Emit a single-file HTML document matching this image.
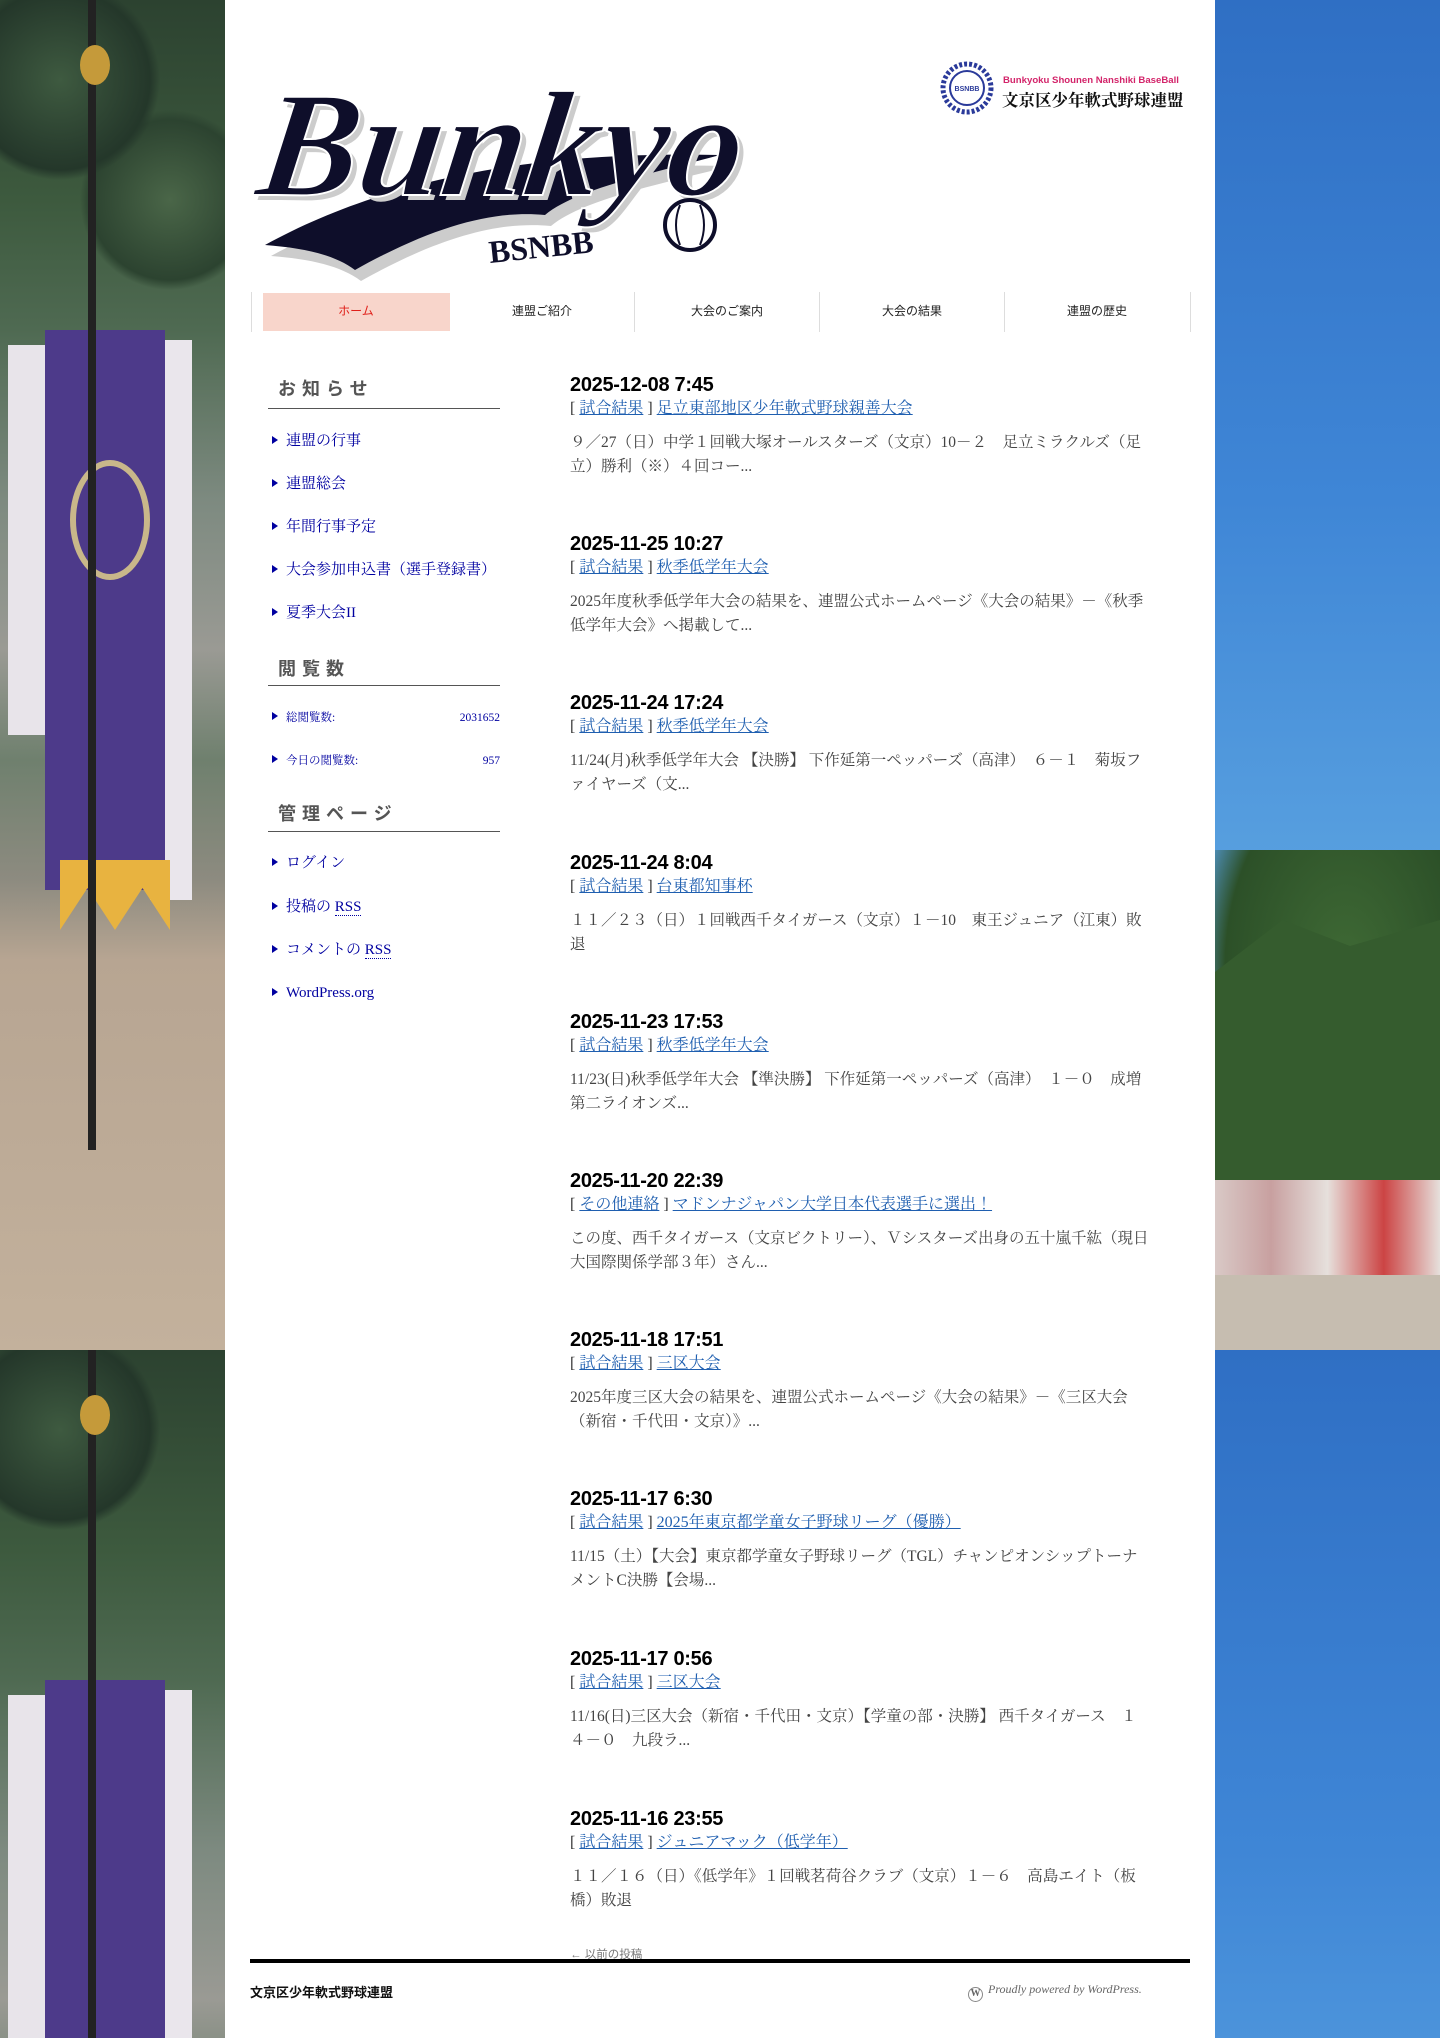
<!DOCTYPE html>
<html><head><meta charset="utf-8">
<style>
*{margin:0;padding:0;box-sizing:border-box}
html,body{width:1440px;height:2038px;overflow:hidden}
body{font-family:"Liberation Serif","Noto Serif CJK SC",serif;background:#4a8fd6}
#w{position:relative;width:1440px;height:2038px;overflow:hidden;background:#4a8fd6}
.abs{position:absolute}
.L{left:0;width:225px;height:1350px;overflow:hidden;background:linear-gradient(180deg,#2c4230 0,#3d5a3e 200px,#4f6a52 330px,#7d8a80 500px,#9a9a94 650px,#6f806e 760px,#8d8b80 880px,#b7a592 960px,#c3b19c 1350px)}
.R{left:1215px;width:225px;height:1350px;overflow:hidden;background:linear-gradient(180deg,#2f6fc4 0,#3f86d6 500px,#5aa2e0 900px,#7ab6e6 1150px)}
.nav a{position:absolute;top:292px;height:39px;line-height:39px;text-align:center;font-family:"Liberation Sans","Noto Sans CJK JP",sans-serif;font-size:12px;color:#222;width:186px}
.sep{position:absolute;top:292px;height:40px;width:1px;background:#ddd}
.sh{position:absolute;left:278px;font-family:"Liberation Sans","Noto Sans CJK JP",sans-serif;font-weight:bold;font-size:18px;color:#555;letter-spacing:6px}
.sl{position:absolute;left:268px;width:232px;height:1px;background:#555}
.si{position:absolute;left:272px;font-size:15px;color:#0000a0;line-height:20px;font-family:"Liberation Serif","Noto Serif CJK JP",serif}
.si:before{content:"";display:inline-block;width:0;height:0;border-left:6px solid #0000a0;border-top:4px solid transparent;border-bottom:4px solid transparent;margin-right:8px;vertical-align:1px}
.ss{font-size:11.5px}
.post{position:absolute;left:570px;width:600px}
.d{font-family:"Liberation Sans",sans-serif;font-weight:bold;font-size:20px;color:#000;line-height:24px;letter-spacing:-0.3px}
.c{font-size:16px;color:#333;line-height:24px;font-family:"Liberation Serif","Noto Serif CJK JP",serif}
.c a{color:#1f5fb0;text-decoration:underline}
.e{font-size:15.5px;color:#444;line-height:24px;margin-top:10px;font-family:"Liberation Serif","Noto Serif CJK JP",serif;white-space:nowrap}
</style></head><body><div id="w">
<div class="abs L" style="top:0">
 <div class="abs" style="left:0;top:0;width:225px;height:330px;background:radial-gradient(circle at 60px 80px,#3e5a40 0,#24372a 90px,transparent 100px),radial-gradient(circle at 170px 200px,#4a6648 0,#2c4330 80px,transparent 90px)"></div>
 <div class="abs" style="left:8px;top:345px;width:40px;height:390px;background:#e8e4ea"></div>
 <div class="abs" style="left:150px;top:340px;width:42px;height:560px;background:#eae6ec"></div>
 <div class="abs" style="left:45px;top:330px;width:120px;height:560px;background:#4d3a8a"></div>
 <div class="abs" style="left:60px;top:860px;width:110px;height:70px;background:#e8b340;clip-path:polygon(0 0,100% 0,100% 100%,75% 40%,50% 100%,25% 40%,0 100%)"></div>
 <div class="abs" style="left:70px;top:460px;width:80px;height:120px;border-radius:50%;border:6px solid #c9b78a"></div>
 <div class="abs" style="left:88px;top:0;width:8px;height:1150px;background:#222"></div>
 <div class="abs" style="left:80px;top:45px;width:30px;height:40px;border-radius:50%;background:#c59a3a"></div>
</div>
<div class="abs L" style="top:1350px;height:688px">
 <div class="abs" style="left:0;top:0;width:225px;height:330px;background:radial-gradient(circle at 60px 80px,#3e5a40 0,#24372a 90px,transparent 100px)"></div>
 <div class="abs" style="left:8px;top:345px;width:40px;height:390px;background:#e8e4ea"></div>
 <div class="abs" style="left:150px;top:340px;width:42px;height:400px;background:#eae6ec"></div>
 <div class="abs" style="left:45px;top:330px;width:120px;height:400px;background:#4d3a8a"></div>
 <div class="abs" style="left:88px;top:0;width:8px;height:700px;background:#222"></div>
 <div class="abs" style="left:80px;top:45px;width:30px;height:40px;border-radius:50%;background:#c59a3a"></div>
</div>
<div class="abs R" style="top:0">
 <div class="abs" style="left:0;top:850px;width:225px;height:330px;background:radial-gradient(ellipse at 130px 120px,#3f6a35 0,#2c5028 120px,transparent 160px)"></div>
 <div class="abs" style="left:0;top:920px;width:225px;height:260px;background:#355c2e;clip-path:polygon(0 20%,30% 0,60% 10%,100% 0,100% 100%,0 100%)"></div>
 <div class="abs" style="left:0;top:1180px;width:225px;height:95px;background:linear-gradient(90deg,#d9c9c6,#c8a0a0,#e6e0dc,#c44,#e6e0dc)"></div>
 <div class="abs" style="left:0;top:1275px;width:225px;height:75px;background:#c6bdb0"></div>
</div>
<div class="abs R" style="top:1350px;height:688px"></div>

<div class="abs" style="left:225px;top:0;width:990px;height:2038px;background:#fff"></div>

<svg class="abs" style="left:245px;top:45px" width="500" height="240" viewBox="0 0 500 240">
 <path d="M20 205 C120 150 260 110 480 115 C400 135 330 150 300 175 C250 170 190 185 110 230 C90 215 60 208 20 205Z" fill="#ccc" transform="translate(6,6)"/>
 <path d="M20 200 C120 145 260 105 475 110 C400 130 330 145 300 170 C250 165 190 180 110 225 C90 210 60 203 20 200Z" fill="#0e0e2a"/>
 <text x="30" y="150" font-family="Liberation Serif,serif" font-style="italic" font-weight="bold" font-size="150" fill="#ccc" transform="translate(5,5) skewX(-8)">Bunkyo</text>
 <text x="30" y="150" font-family="Liberation Serif,serif" font-style="italic" font-weight="bold" font-size="150" fill="#0e0e2a" stroke="#fff" stroke-width="2" transform="skewX(-8)">Bunkyo</text>
 <text x="245" y="218" font-family="Liberation Serif,serif" font-weight="bold" font-size="32" fill="#0e0e2a" transform="rotate(-6 245 218)">BSNBB</text>
 <circle cx="445" cy="180" r="25" fill="#fff" stroke="#0e0e2a" stroke-width="4"/>
 <path d="M435 160 Q427 180 435 200 M455 160 Q463 180 455 200" fill="none" stroke="#0e0e2a" stroke-width="2"/>
</svg>
<svg class="abs" style="left:940px;top:60px" width="60" height="58" viewBox="0 0 60 58">
 <circle cx="27" cy="28" r="24" fill="none" stroke="#2a3a9a" stroke-width="5" stroke-dasharray="3 2"/>
 <circle cx="27" cy="28" r="17" fill="#fff" stroke="#2a3a9a" stroke-width="2"/>
 <text x="27" y="31" font-family="Liberation Sans" font-size="7" font-weight="bold" fill="#2a3a9a" text-anchor="middle">BSNBB</text>
</svg>
<div class="abs" style="left:1003px;top:75px;font-family:'Liberation Sans',sans-serif;font-weight:bold;font-size:9.6px;color:#d3246a;white-space:nowrap">Bunkyoku Shounen Nanshiki BaseBall</div>
<div class="abs" style="left:1002px;top:87px;font-family:'Liberation Serif','Noto Serif CJK JP',serif;font-weight:bold;font-size:16.5px;color:#111;white-space:nowrap">文京区少年軟式野球連盟</div>

<div class="nav">
 <div class="abs" style="left:263px;top:293px;width:187px;height:38px;background:#f8d5cb"></div>
 <div class="sep" style="left:251px"></div><div class="sep" style="left:634px"></div><div class="sep" style="left:819px"></div><div class="sep" style="left:1004px"></div><div class="sep" style="left:1190px"></div>
 <a style="left:263px;color:#e0201a">ホーム</a>
 <a style="left:449px">連盟ご紹介</a>
 <a style="left:634px">大会のご案内</a>
 <a style="left:819px">大会の結果</a>
 <a style="left:1004px">連盟の歴史</a>
</div>

<div class="sh" style="top:375px">お知らせ</div><div class="sl" style="top:408px"></div>
<div class="si" style="top:431px">連盟の行事</div>
<div class="si" style="top:474px">連盟総会</div>
<div class="si" style="top:517px">年間行事予定</div>
<div class="si" style="top:560px">大会参加申込書（選手登録書）</div>
<div class="si" style="top:603px">夏季大会II</div>
<div class="sh" style="top:655px">閲覧数</div><div class="sl" style="top:685px"></div>
<div class="si ss" style="top:708px;width:228px">総閲覧数:<span style="float:right">2031652</span></div>
<div class="si ss" style="top:751px;width:228px">今日の閲覧数:<span style="float:right">957</span></div>
<div class="sh" style="top:800px">管理ページ</div><div class="sl" style="top:831px"></div>
<div class="si" style="top:853px">ログイン</div>
<div class="si" style="top:897px">投稿の <span style="border-bottom:1px dotted #0000a0">RSS</span></div>
<div class="si" style="top:940px">コメントの <span style="border-bottom:1px dotted #0000a0">RSS</span></div>
<div class="si" style="top:983px">WordPress.org</div>

<div class="post" style="top:373px"><div class="d">2025-12-08 7:45</div><div class="c">[ <a>試合結果</a> ] <a>足立東部地区少年軟式野球親善大会</a></div><div class="e">９／27（日）中学１回戦大塚オールスターズ（文京）10－２　足立ミラクルズ（足<br>立）勝利（※）４回コー...</div></div>
<div class="post" style="top:532px"><div class="d">2025-11-25 10:27</div><div class="c">[ <a>試合結果</a> ] <a>秋季低学年大会</a></div><div class="e">2025年度秋季低学年大会の結果を、連盟公式ホームページ《大会の結果》－《秋季<br>低学年大会》へ掲載して...</div></div>
<div class="post" style="top:691px"><div class="d">2025-11-24 17:24</div><div class="c">[ <a>試合結果</a> ] <a>秋季低学年大会</a></div><div class="e">11/24(月)秋季低学年大会 【決勝】 下作延第一ペッパーズ（高津）　６－１　菊坂フ<br>ァイヤーズ（文...</div></div>
<div class="post" style="top:851px"><div class="d">2025-11-24 8:04</div><div class="c">[ <a>試合結果</a> ] <a>台東都知事杯</a></div><div class="e">１１／２３（日）１回戦西千タイガース（文京）１－10　東王ジュニア（江東）敗<br>退</div></div>
<div class="post" style="top:1010px"><div class="d">2025-11-23 17:53</div><div class="c">[ <a>試合結果</a> ] <a>秋季低学年大会</a></div><div class="e">11/23(日)秋季低学年大会 【準決勝】 下作延第一ペッパーズ（高津）　１－０　成増<br>第二ライオンズ...</div></div>
<div class="post" style="top:1169px"><div class="d">2025-11-20 22:39</div><div class="c">[ <a>その他連絡</a> ] <a>マドンナジャパン大学日本代表選手に選出！</a></div><div class="e">この度、西千タイガース（文京ビクトリー）、Ｖシスターズ出身の五十嵐千紘（現日<br>大国際関係学部３年）さん...</div></div>
<div class="post" style="top:1328px"><div class="d">2025-11-18 17:51</div><div class="c">[ <a>試合結果</a> ] <a>三区大会</a></div><div class="e">2025年度三区大会の結果を、連盟公式ホームページ《大会の結果》－《三区大会<br>（新宿・千代田・文京）》...</div></div>
<div class="post" style="top:1487px"><div class="d">2025-11-17 6:30</div><div class="c">[ <a>試合結果</a> ] <a>2025年東京都学童女子野球リーグ（優勝）</a></div><div class="e">11/15（土）【大会】東京都学童女子野球リーグ（TGL）チャンピオンシップトーナ<br>メントC決勝【会場...</div></div>
<div class="post" style="top:1647px"><div class="d">2025-11-17 0:56</div><div class="c">[ <a>試合結果</a> ] <a>三区大会</a></div><div class="e">11/16(日)三区大会（新宿・千代田・文京）【学童の部・決勝】 西千タイガース　１<br>４－０　九段ラ...</div></div>
<div class="post" style="top:1807px"><div class="d">2025-11-16 23:55</div><div class="c">[ <a>試合結果</a> ] <a>ジュニアマック（低学年）</a></div><div class="e">１１／１６（日）《低学年》１回戦茗荷谷クラブ（文京）１－６　高島エイト（板<br>橋）敗退</div></div>

<div class="abs" style="left:570px;top:1946px;font-family:'Liberation Sans','Noto Sans CJK JP',sans-serif;font-size:11.5px;color:#777">← 以前の投稿</div>
<div class="abs" style="left:250px;top:1959px;width:940px;height:4px;background:#000"></div>
<div class="abs" style="left:250px;top:1982px;font-family:'Liberation Sans','Noto Sans CJK JP',sans-serif;font-weight:bold;font-size:13px;color:#111">文京区少年軟式野球連盟</div>
<div class="abs" style="left:968px;top:1982px;font-size:12px;font-style:italic;color:#666;white-space:nowrap"><span style="display:inline-block;width:15px;height:15px;border:1.5px solid #888;border-radius:50%;vertical-align:-3px;margin-right:5px;text-align:center;font-size:10px;font-style:normal;line-height:12px;font-weight:bold">W</span>Proudly powered by WordPress.</div>
</div></body></html>
